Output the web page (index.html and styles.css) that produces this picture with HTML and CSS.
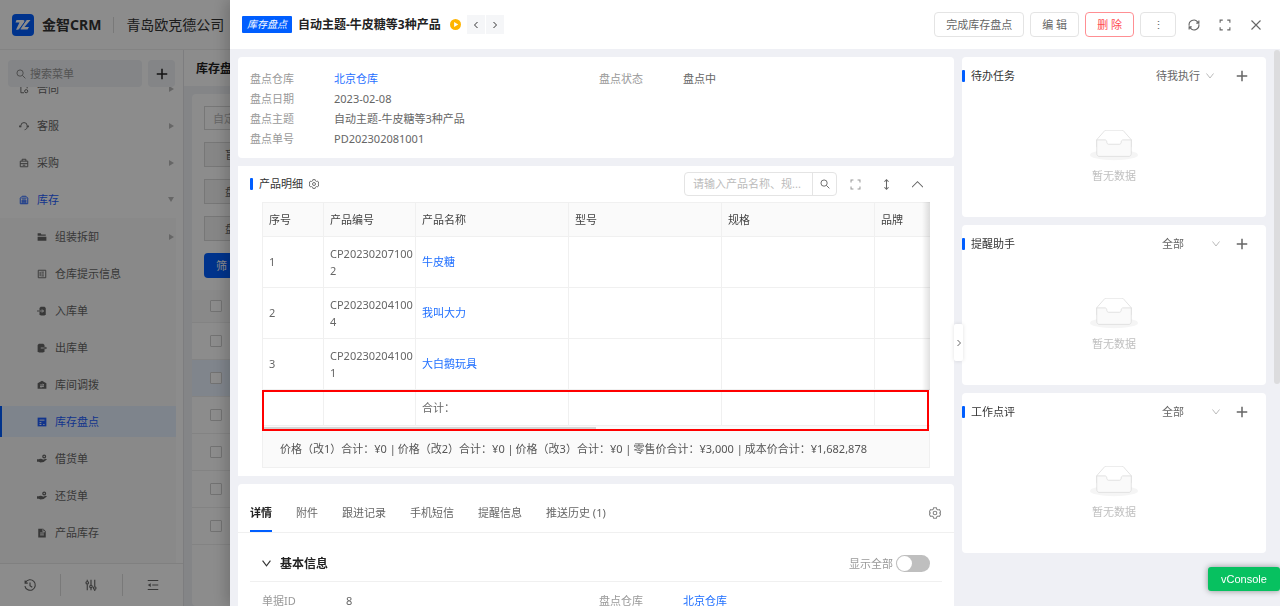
FILE: index.html
```html
<!DOCTYPE html>
<html lang="zh-CN">
<head>
  <meta charset="UTF-8">
  <meta name="viewport" content="width=device-width, initial-scale=1.0">
  <title>库存盘点 - 金智CRM</title>
  <link rel="stylesheet" href="styles.css">
</head>
<body>
  <svg class="sprite" aria-hidden="true">
    <symbol id="i-search" viewBox="0 0 16 16"><circle cx="6.5" cy="6.5" r="5"/><path d="M10.2 10.2L15 15"/></symbol>
    <symbol id="i-plus" viewBox="0 0 16 16"><path d="M8 1v14M1 8h14"/></symbol>
    <symbol id="i-left" viewBox="0 0 16 16"><path d="M11 2L5 8l6 6"/></symbol>
    <symbol id="i-right" viewBox="0 0 16 16"><path d="M5 2l6 6-6 6"/></symbol>
    <symbol id="i-down" viewBox="0 0 16 16"><path d="M1 3l7 9 7-9"/></symbol>
    <symbol id="i-up" viewBox="0 0 16 16"><path d="M0 12l8-8 8 8"/></symbol>
    <symbol id="i-full" viewBox="0 0 16 16"><path d="M1.500 5V1.500H5M11 1.500h3.500V5M14.500 11v3.500H11M5 14.500H1.500V11"/></symbol>
    <symbol id="i-gear" viewBox="0 0 16 16"><path d="M6.200 1h3.600l.5 1.900 1.700 1 1.900-.5 1.800 3.100L14.300 8l1.400 1.500-1.800 3.100-1.900-.5-1.700 1-.5 1.900H6.200l-.5-1.900-1.700-1-1.900.5L.3 9.500 1.700 8 .3 6.500l1.800-3.100 1.900.5 1.700-1z"/><circle cx="8" cy="8" r="2.400"/></symbol>
    <symbol id="i-empty" viewBox="0 0 64 41">
      <ellipse cx="32" cy="33" rx="32" ry="7" fill="#f5f5f5"/>
      <path d="M55 12.760L44.854 1.258C44.367.474 43.656 0 42.907 0H21.093c-.749 0-1.460.474-1.947 1.257L9 12.761V22h46v-9.240z" fill="#fff" stroke="#d9d9d9"/>
      <path d="M41.613 15.931c0-1.605.994-2.930 2.227-2.931H55v18.137C55 33.260 53.680 35 52.050 35h-40.100C10.320 35 9 33.259 9 31.137V13h11.160c1.233 0 2.227 1.323 2.227 2.928v.022c0 1.605 1.005 2.901 2.237 2.901h14.752c1.232 0 2.237-1.308 2.237-2.913v-.007z" fill="#fafafa" stroke="#d9d9d9"/>
    </symbol>
    <symbol id="i-hand" viewBox="0 0 16 16"><path class="solid" d="M0 8.500h3l2-.8 3.500.3 1 1.300 4.500-1.600 2 .6-5.300 4.500-5.200.8L3 12.500H0z"/><circle cx="11.500" cy="4" r="2.200" stroke-width="2"/></symbol>
  </svg>

  <div class="app">
    <header class="topbar">
      <svg class="logo" viewBox="0 0 22 22"><rect width="22" height="22" rx="4" fill="#005eff"/><path d="M4.500 6H11c1.500 0 2 1 1.300 2.300L10 12.500c-1 2-2.500 3.200-4.500 3.200H4L7.500 8.500h-4zM14 6h4.500L12.500 13H17l-1.500 2.600H8.500z" fill="#fff"/><path d="M15 5L7 15.800" stroke="#005eff"/></svg>
      <strong class="brand">金智CRM</strong>
      <span class="company">青岛欧克德公司</span>
    </header>

    <div class="app-body">
      <aside class="sidebar">
        <div class="menu-search">
          <label class="search-box"><svg class="icon"><use href="#i-search"/></svg><input type="text" placeholder="搜索菜单" aria-label="搜索菜单"></label>
          <button class="add-btn" aria-label="添加"><svg class="icon"><use href="#i-plus"/></svg></button>
        </div>
        <nav class="menu">
          <ul class="menu-list">
            <li><a href="#"><svg class="icon" viewBox="0 0 16 16"><path d="M8 14H3V2h10v5"/><circle cx="11.500" cy="11.500" r="2.500"/></svg>合同<i class="caret"></i></a></li>
            <li><a href="#"><svg class="icon" viewBox="0 0 16 16"><path d="M3 10V7.500a5 5 0 0 1 10 0V10c0 2-1.500 3.500-4 4"/><path d="M1.500 7v3M14.500 7v3" stroke-width="2.500"/></svg>客服<i class="caret"></i></a></li>
            <li><a href="#"><svg class="icon" viewBox="0 0 16 16"><path d="M2 5h12v9H2zM5 5V2h6v3M2 9h12M6 11.500h4"/></svg>采购<i class="caret"></i></a></li>
            <li class="open"><a href="#"><svg class="icon" viewBox="0 0 16 16"><path d="M2 14V5l3-3h6l3 3v9zM5 14V8h6v6M8 8v6M5 11h6M4 5h8"/></svg>库存<i class="caret caret-down"></i></a></li>
          </ul>
          <ul class="menu-list submenu">
            <li><a href="#"><svg class="icon" viewBox="0 0 16 16"><path class="solid" d="M1 2h5l1 2h7v2H1zM1 7.500h14V14H1z"/></svg>组装拆卸<i class="caret"></i></a></li>
            <li><a href="#"><svg class="icon" viewBox="0 0 16 16"><path d="M2 2h12v12H2zM7 5h4M7 8h4M7 11h4M5 4.500v7"/></svg>仓库提示信息</a></li>
            <li><a href="#"><svg class="icon" viewBox="0 0 16 16"><path class="solid" d="M6 1h6l2 2v10l-2 2H6l-2-2V3z"/><path d="M0 8h4"/><path d="M5 8h5M8 5.500L10.500 8 8 10.500" stroke="#fff"/></svg>入库单</a></li>
            <li><a href="#"><svg class="icon" viewBox="0 0 16 16"><path class="solid" d="M3 1h7l2 2v10l-2 2H3l-2-2V3z"/><path d="M6 8h5" stroke="#fff"/><path d="M11 8h4M13 6l2 2-2 2"/></svg>出库单</a></li>
            <li><a href="#"><svg class="icon" viewBox="0 0 16 16"><path class="solid" d="M8 1l7 4v9H1V5z"/><path d="M5 8h6L9 6.500M11 10.500H5L7 12" stroke="#fff"/></svg>库间调拨</a></li>
            <li class="active"><a href="#"><svg class="icon" viewBox="0 0 16 16"><path class="solid" d="M1 1h14v14H1z"/><path d="M4 5h8M4 9h3M4 12h3M10 12h2" stroke="#fff"/></svg>库存盘点</a></li>
            <li><a href="#"><svg class="icon"><use href="#i-hand"/></svg>借货单</a></li>
            <li><a href="#"><svg class="icon"><use href="#i-hand"/></svg>还货单</a></li>
            <li><a href="#"><svg class="icon" viewBox="0 0 16 16"><path class="solid" d="M2 1h8l4 4v10H2z"/><path d="M5 8h6M5 11h6M9.500 2v4H13" stroke="#fff"/></svg>产品库存</a></li>
          </ul>
        </nav>
        <div class="side-foot">
          <button aria-label="历史"><svg class="icon" viewBox="0 0 16 16"><path d="M2 4.500a7 7 0 1 1-.8 5M1.500 2v3.500H5M8 4.500V9l3 2"/></svg></button>
          <button aria-label="设置"><svg class="icon" viewBox="0 0 16 16"><path d="M3 1v2M3 7v8M8 1v7M8 12v3M13 1v9M13 14v2"/><circle cx="3" cy="5" r="1.700"/><circle cx="8" cy="10" r="1.700"/><circle cx="13" cy="12" r="1.700"/></svg></button>
          <button aria-label="收起"><svg class="icon" viewBox="0 0 16 16"><path d="M1 2h14M7 8h8M1 14h14"/><path class="solid" d="M1 8l4-2.500v5z"/></svg></button>
        </div>
      </aside>

      <main class="list-page">
        <h2>库存盘点</h2>
        <div class="list-card">
          <div class="filters">
            <input type="text" placeholder="自定义筛选" aria-label="自定义筛选">
            <button>盲盘</button>
            <button>盘点</button>
            <button>盘点</button>
            <button class="primary">筛 选</button>
          </div>
          <table class="list-table">
            <tr><th><input type="checkbox" aria-label="全选"></th></tr>
            <tr><td><input type="checkbox" aria-label="选择"></td></tr>
            <tr class="current"><td><input type="checkbox" aria-label="选择"></td></tr>
            <tr><td><input type="checkbox" aria-label="选择"></td></tr>
            <tr><td><input type="checkbox" aria-label="选择"></td></tr>
            <tr><td><input type="checkbox" aria-label="选择"></td></tr>
            <tr><td><input type="checkbox" aria-label="选择"></td></tr>
          </table>
        </div>
      </main>
    </div>
  </div>

  <div class="mask"></div>

  <section class="drawer">
    <header class="drawer-head">
      <span class="tag">库存盘点</span>
      <h1>自动主题-牛皮糖等3种产品</h1>
      <svg class="play" viewBox="0 0 12 12"><circle cx="6" cy="6" r="6" fill="#ffb400"/><path d="M4.500 3.200v5.600L9 6z" fill="#fff"/></svg>
      <div class="pager">
        <button aria-label="上一条"><svg class="icon"><use href="#i-left"/></svg></button>
        <button aria-label="下一条"><svg class="icon"><use href="#i-right"/></svg></button>
      </div>
      <div class="actions">
        <button class="btn">完成库存盘点</button>
        <button class="btn">编 辑</button>
        <button class="btn danger">删 除</button>
        <button class="btn more" aria-label="更多">⋮</button>
      </div>
      <div class="tools">
        <button aria-label="刷新"><svg class="icon" viewBox="0 0 16 16"><path d="M1.500 9a6.500 6.500 0 0 1 11.300-5.300L14 5.500M14.500 7a6.500 6.500 0 0 1-11.300 5.300L2 10.500M14.500 2v3.500H11M1.500 14v-3.500H5"/></svg></button>
        <button aria-label="全屏"><svg class="icon"><use href="#i-full"/></svg></button>
        <button aria-label="关闭"><svg class="icon" viewBox="0 0 16 16"><path d="M2 2l12 12M14 2L2 14"/></svg></button>
      </div>
    </header>

    <div class="drawer-body">
      <div class="col-main">
        <section class="card summary">
          <dl class="info">
            <div><dt>盘点仓库</dt><dd><a href="#">北京仓库</a></dd></div>
            <div><dt>盘点状态</dt><dd>盘点中</dd></div>
            <div class="wide"><dt>盘点日期</dt><dd>2023-02-08</dd></div>
            <div class="wide"><dt>盘点主题</dt><dd>自动主题-牛皮糖等3种产品</dd></div>
            <div class="wide"><dt>盘点单号</dt><dd>PD202302081001</dd></div>
          </dl>
        </section>

        <section class="card products">
          <div class="products-head">
            <h3 class="bar-title">产品明细</h3>
            <svg class="icon gear"><use href="#i-gear"/></svg>
            <div class="search-group">
              <input type="text" placeholder="请输入产品名称、规..." aria-label="搜索产品">
              <button aria-label="搜索"><svg class="icon"><use href="#i-search"/></svg></button>
            </div>
            <button class="tool light" aria-label="全屏"><svg class="icon"><use href="#i-full"/></svg></button>
            <button class="tool" aria-label="行高"><svg class="icon" viewBox="0 0 16 16"><path d="M8 1v14M5 4l3-3 3 3M5 12l3 3 3-3"/></svg></button>
            <button class="tool" aria-label="收起"><svg class="icon"><use href="#i-up"/></svg></button>
          </div>
          <div class="table-wrap">
            <div class="table-scroll">
              <table class="product-table">
                <colgroup><col class="c-no"><col class="c-code"><col class="c-wide"><col class="c-wide"><col class="c-wide"><col class="c-wide"></colgroup>
                <thead>
                  <tr><th>序号</th><th>产品编号</th><th>产品名称</th><th>型号</th><th>规格</th><th>品牌</th></tr>
                </thead>
                <tbody>
                  <tr><td>1</td><td class="code">CP202302071002</td><td><a href="#">牛皮糖</a></td><td></td><td></td><td></td></tr>
                  <tr><td>2</td><td class="code">CP202302041004</td><td><a href="#">我叫大力</a></td><td></td><td></td><td></td></tr>
                  <tr><td>3</td><td class="code">CP202302041001</td><td><a href="#">大白鹅玩具</a></td><td></td><td></td><td></td></tr>
                </tbody>
                <tfoot>
                  <tr><td></td><td></td><td>合计：</td><td></td><td></td><td></td></tr>
                </tfoot>
              </table>
            </div>
            <div class="scroll-x"></div>
            <div class="total-mark"></div>
          </div>
          <div class="totals">
            <span>价格（改1）合计：¥0 |</span>
            <span>价格（改2）合计：¥0 |</span>
            <span>价格（改3）合计：¥0 |</span>
            <span>零售价合计：¥3,000 |</span>
            <span>成本价合计：¥1,682,878</span>
          </div>
        </section>

        <section class="card detail">
          <nav class="tabs">
            <a class="on" href="#">详情</a>
            <a href="#">附件</a>
            <a href="#">跟进记录</a>
            <a href="#">手机短信</a>
            <a href="#">提醒信息</a>
            <a href="#">推送历史 (1)</a>
            <button aria-label="设置"><svg class="icon"><use href="#i-gear"/></svg></button>
          </nav>
          <div class="section-head">
            <svg class="icon"><use href="#i-down"/></svg>
            <h3>基本信息</h3>
            <label for="show-all">显示全部</label>
            <input type="checkbox" class="switch" id="show-all">
          </div>
          <dl class="info">
            <div><dt>单据ID</dt><dd>8</dd></div>
            <div><dt>盘点仓库</dt><dd><a href="#">北京仓库</a></dd></div>
          </dl>
        </section>
      </div>

      <aside class="col-side">
        <button class="fold" aria-label="收起侧栏"><svg class="icon"><use href="#i-right"/></svg></button>
        <section class="card widget todo">
          <div class="widget-head">
            <h3 class="bar-title">待办任务</h3>
            <select aria-label="待办任务筛选"><option>待我执行</option></select>
            <svg class="icon arrow"><use href="#i-down"/></svg>
            <button aria-label="添加"><svg class="icon"><use href="#i-plus"/></svg></button>
          </div>
          <div class="empty"><svg><use href="#i-empty"/></svg><p>暂无数据</p></div>
        </section>
        <section class="card widget">
          <div class="widget-head">
            <h3 class="bar-title">提醒助手</h3>
            <select aria-label="提醒助手筛选"><option>全部</option></select>
            <svg class="icon arrow"><use href="#i-down"/></svg>
            <button aria-label="添加"><svg class="icon"><use href="#i-plus"/></svg></button>
          </div>
          <div class="empty"><svg><use href="#i-empty"/></svg><p>暂无数据</p></div>
        </section>
        <section class="card widget">
          <div class="widget-head">
            <h3 class="bar-title">工作点评</h3>
            <select aria-label="工作点评筛选"><option>全部</option></select>
            <svg class="icon arrow"><use href="#i-down"/></svg>
            <button aria-label="添加"><svg class="icon"><use href="#i-plus"/></svg></button>
          </div>
          <div class="empty"><svg><use href="#i-empty"/></svg><p>暂无数据</p></div>
        </section>
      </aside>
      <div class="scroll-y"></div>
    </div>
  </section>

  <button class="vconsole">vConsole</button>
</body>
</html>
```

FILE: styles.css
```css
* {
  box-sizing: border-box;
}
body {
  margin: 0;
  height: 100vh;
  overflow: hidden;
  font-family: "Noto Sans", "Noto Sans CJK SC", sans-serif;
  font-size: 11px;
  line-height: 16px;
  color: #666;
}
h1, h2, h3, p, ul, dl, dd {
  margin: 0;
  padding: 0;
}
ul {
  list-style: none;
}
a {
  color: #1f6fff;
  text-decoration: none;
}
button, input, select {
  font: inherit;
  color: inherit;
  margin: 0;
  padding: 0;
  border: none;
  background: none;
  outline: none;
}
button {
  display: flex;
  align-items: center;
  justify-content: center;
  cursor: pointer;
}
input::placeholder {
  color: #bbb;
  opacity: 1;
}
.sprite {
  display: none;
}
.icon {
  width: 10px;
  height: 10px;
  flex: none;
  overflow: visible;
  fill: none;
  stroke: currentColor;
  stroke-width: 1.5;
}
.solid {
  fill: currentColor;
  stroke: none;
}

/* page under the drawer */
.app {
  height: 100vh;
  display: flex;
  flex-direction: column;
  background: #fff;
}
.topbar {
  height: 50px;
  flex: none;
  display: flex;
  align-items: center;
  padding-left: 12px;
  border-bottom: 1px solid #eee;
  color: #333;
}
.logo {
  width: 22px;
  height: 22px;
}
.brand {
  margin-left: 8px;
  padding-right: 12px;
  border-right: 1px solid #ddd;
  font-size: 14px;
}
.company {
  margin-left: 12px;
  font-size: 14px;
}
.app-body {
  flex: 1;
  min-height: 0;
  display: flex;
}
.sidebar {
  width: 184px;
  flex: none;
  display: flex;
  flex-direction: column;
  border-right: 1px solid #e4e4e8;
}
.menu-search {
  display: flex;
  gap: 6px;
  padding: 10px 8px 0;
}
.search-box {
  flex: 1;
  min-width: 0;
  height: 27px;
  display: flex;
  align-items: center;
  gap: 4px;
  padding: 0 8px;
  border-radius: 4px;
  background: #f0f2f6;
  color: #888;
}
.search-box input {
  width: 100%;
  min-width: 0;
}
.search-box input::placeholder {
  color: #999;
}
.add-btn {
  width: 27px;
  height: 27px;
  border-radius: 4px;
  background: #f0f2f6;
  color: #222;
}
.add-btn .icon {
  width: 12px;
  height: 12px;
  stroke-width: 2;
}
.menu {
  flex: 1;
  min-height: 0;
  overflow: hidden;
  padding-right: 7px;
}
.menu-list:first-child {
  margin-top: -17px;
}
.menu-list {
  display: flow-root;
}
.menu-list li {
  padding: 3px 0;
}
.menu-list a {
  height: 31px;
  display: flex;
  align-items: center;
  gap: 8px;
  padding: 0 2px 0 19px;
  color: #666;
}
.menu-list .open > a {
  color: #1f5fff;
}
.submenu {
  height: 100%;
  background: #fafafa;
}
.submenu a {
  padding-left: 37px;
}
.menu-list .active a {
  padding-left: 35px;
  border-left: 2px solid #005eff;
  background: #e6f1ff;
  color: #1f5fff;
}
.caret {
  margin-left: auto;
  border: 3px solid transparent;
  border-left: 5px solid #bbb;
  border-right: none;
}
.caret-down {
  border: 3px solid transparent;
  border-top: 5px solid #bbb;
  border-bottom: none;
}
.side-foot {
  height: 43px;
  flex: none;
  display: flex;
  align-items: center;
  border-top: 1px solid #eaeaea;
}
.side-foot button {
  flex: 1;
  height: 22px;
}
.side-foot button + button {
  border-left: 1px solid #ddd;
}
.side-foot .icon {
  width: 12px;
  height: 12px;
}
.list-page {
  flex: 1;
  display: flex;
  flex-direction: column;
  background: #f0f2f6;
}
.list-page h2 {
  height: 36px;
  flex: none;
  padding-left: 12px;
  background: #fff;
  color: #222;
  font-size: 12px;
  line-height: 38px;
}
.list-card {
  flex: 1;
  margin: 8px 8px 0;
  background: #fff;
  border-radius: 4px;
}
.filters {
  display: flex;
  flex-direction: column;
  align-items: flex-start;
  gap: 12px;
  padding: 12px;
}
.filters input,
.filters button {
  width: 160px;
  height: 25px;
  padding: 0 8px;
  border: 1px solid #d9d9d9;
}
.filters input {
  height: 24px;
}
.filters button {
  justify-content: flex-start;
  padding-left: 20px;
  background: #f5f5f5;
}
.filters .primary {
  width: 50px;
  padding-left: 12px;
  border: none;
  border-radius: 4px;
  background: #005eff;
  color: #fff;
}
.list-table {
  width: 100%;
  border-spacing: 0;
}
.list-table td,
.list-table th {
  height: 37px;
  padding: 0 18px;
  border-bottom: 1px solid #eee;
  text-align: left;
}
.list-table th {
  height: 33px;
  background: #fafafa;
}
.list-table .current {
  background: #e9f2ff;
}
.list-table input {
  appearance: none;
  display: block;
  width: 12px;
  height: 12px;
  border: 1px solid #d0d0d0;
  border-radius: 1px;
  background: #fff;
}

.mask {
  position: fixed;
  inset: 0;
  background: rgba(0, 0, 0, 0.45);
}

/* drawer */
.drawer {
  position: fixed;
  top: 0;
  right: 0;
  bottom: 0;
  left: 230px;
  display: flex;
  flex-direction: column;
  background: #eff0f5;
  box-shadow: -4px 0 14px rgba(0, 0, 0, 0.2);
}
.drawer-head {
  height: 50px;
  flex: none;
  display: flex;
  align-items: center;
  padding: 0 18px 0 12px;
  background: #fff;
  border-bottom: 1px solid #eff0f5;
}
.tag {
  padding: 0 5px;
  border-radius: 1px;
  background: #005eff;
  color: #fff;
  font-size: 10px;
  font-style: italic;
  line-height: 17px;
}
.drawer-head h1 {
  margin-left: 6px;
  color: #222;
  font-size: 12px;
}
.play {
  width: 11px;
  height: 11px;
  margin-left: 9px;
}
.pager {
  display: flex;
  gap: 1px;
  margin-left: 6px;
}
.pager button {
  width: 18px;
  height: 19px;
  background: #f5f6f8;
  color: #333;
}
.pager .icon {
  width: 8px;
  height: 8px;
  stroke-width: 2;
}
.actions {
  display: flex;
  gap: 6px;
  margin-left: auto;
}
.btn {
  height: 25px;
  padding: 0 11px;
  border: 1px solid #e4e4e4;
  border-radius: 4px;
  background: #fff;
}
.btn.danger {
  border-color: #ff8f93;
  color: #ff4d4f;
}
.btn.more {
  width: 36px;
}
.tools {
  display: flex;
  gap: 19px;
  margin-left: 12px;
}
.tools .icon {
  width: 12px;
  height: 12px;
}
.drawer-body {
  flex: 1;
  min-height: 0;
  display: flex;
  gap: 8px;
  padding: 7px 0 0 8px;
  overflow: hidden;
}
.col-main {
  flex: 1;
  min-width: 0;
  display: flex;
  flex-direction: column;
  gap: 8px;
}
.card {
  flex: none;
  border-radius: 4px;
  background: #fff;
}
.summary {
  padding: 12px 6px 9px 12px;
}
.info {
  display: grid;
  grid-template-columns: 1fr 1fr;
}
.info div {
  display: flex;
  line-height: 20px;
}
.info .wide {
  grid-column: 1 / 3;
}
.info dt {
  width: 84px;
  color: #999;
}
.products {
  border-radius: 0;
  padding-bottom: 8px;
}
.products-head {
  height: 36px;
  display: flex;
  align-items: center;
  padding: 0 31px 0 12px;
}
.bar-title {
  display: flex;
  align-items: center;
  gap: 6px;
  color: #333;
  font-size: 11px;
  font-weight: normal;
}
.bar-title::before {
  content: "";
  width: 3px;
  height: 12px;
  border-radius: 1px;
  background: #005eff;
}
.gear {
  margin-left: 6px;
}
.search-group {
  width: 153px;
  height: 24px;
  display: flex;
  margin-left: auto;
  margin-right: 13px;
  border: 1px solid #e4e4e4;
  border-radius: 4px;
}
.search-group input {
  flex: 1;
  min-width: 0;
  padding-left: 8px;
}
.search-group button {
  width: 24px;
  border-left: 1px solid #e4e4e4;
}
.tool {
  margin-right: 20px;
}
.tool:last-child {
  margin-right: 0;
}
.tool .icon {
  width: 11px;
  height: 11px;
}
.tool.light {
  color: #999;
}
.table-wrap {
  position: relative;
  margin: 0 24px;
}
.table-scroll {
  overflow: hidden;
  border-left: 1px solid #f0f0f0;
  border-top: 1px solid #f0f0f0;
}
/* shade on the right edge while more columns are hidden */
.table-wrap::after {
  content: "";
  position: absolute;
  top: 0;
  right: 0;
  bottom: 41px;
  width: 8px;
  background: linear-gradient(to right, rgba(0, 0, 0, 0), rgba(0, 0, 0, 0.12));
}
.product-table {
  width: 765px;
  table-layout: fixed;
  border-spacing: 0;
}
.c-no {
  width: 61px;
}
.c-code {
  width: 92px;
}
.c-wide {
  width: 153px;
}
.product-table th,
.product-table td {
  height: 51px;
  padding: 0 6px;
  border-right: 1px solid #f0f0f0;
  border-bottom: 1px solid #f0f0f0;
  text-align: left;
}
.product-table th {
  height: 34px;
  background: #fafafa;
  color: #444;
  font-weight: normal;
}
.product-table .code {
  padding-right: 1px;
  line-height: 17px;
  word-break: break-all;
}
.product-table tfoot td {
  height: 36px;
}
.scroll-x {
  height: 5px;
  background: linear-gradient(#d4d4d4, #d4d4d4) no-repeat left / 50% 4px #fafafa;
}
.total-mark {
  position: absolute;
  left: 0;
  right: 1px;
  bottom: 0;
  height: 41px;
  border: 2px solid #f00;
}
.totals {
  display: flex;
  gap: 2px;
  margin: 0 24px;
  padding: 10px 17px;
  border: 1px solid #f0f0f0;
  border-top: none;
  background: #fafafa;
  color: #555;
  white-space: nowrap;
}
.tabs {
  height: 49px;
  display: flex;
  align-items: flex-end;
  gap: 24px;
  padding: 0 13px 0 12px;
  border-bottom: 1px solid #f0f0f0;
}
.tabs a {
  height: 27px;
  color: #666;
}
.tabs .on {
  border-bottom: 2px solid #005eff;
  color: #222;
  font-weight: bold;
}
.tabs button {
  align-self: center;
  margin-left: auto;
  padding-top: 10px;
  color: #888;
}
.tabs .icon {
  width: 12px;
  height: 12px;
}
.section-head {
  display: flex;
  align-items: center;
  margin: 0 12px;
  padding: 22px 12px 9px;
  border-bottom: 1px solid #f0f0f0;
}
.section-head .icon {
  width: 9px;
  height: 9px;
  color: #333;
  stroke-width: 2;
}
.section-head h3 {
  margin-left: 9px;
  color: #222;
  font-size: 12px;
  line-height: 17px;
}
.section-head label {
  margin-left: auto;
  margin-right: 3px;
  color: #999;
}
.switch {
  appearance: none;
  width: 34px;
  height: 17px;
  border-radius: 9px;
  background: #bfbfbf;
}
.switch::before {
  content: "";
  display: block;
  width: 15px;
  height: 15px;
  margin: 1px;
  border-radius: 50%;
  background: #fff;
}
.detail .info {
  padding: 9px 18px 10px 24px;
}

/* right column */
.col-side {
  position: relative;
  width: 304px;
  flex: none;
  display: flex;
  flex-direction: column;
  gap: 8px;
}
.fold {
  position: absolute;
  top: 267px;
  left: -8px;
  width: 9px;
  height: 37px;
  border-radius: 2px;
  background: #fff;
  box-shadow: 0 0 4px rgba(0, 0, 0, 0.12);
}
.fold .icon {
  width: 8px;
  height: 8px;
  stroke-width: 2;
}
.widget {
  height: 160px;
}
.widget-head {
  height: 38px;
  display: flex;
  align-items: center;
  padding-right: 18px;
}
.widget-head select {
  width: 44px;
  margin-left: auto;
  margin-right: 6px;
  appearance: none;
}
.arrow {
  width: 8px;
  height: 8px;
  color: #bbb;
  stroke-width: 2;
}
.widget-head button {
  margin-left: 16px;
}
.todo .widget-head button {
  margin-left: 22px;
}
.widget-head button .icon {
  width: 12px;
  height: 12px;
  stroke-width: 2;
}
.empty {
  display: flex;
  flex-direction: column;
  align-items: center;
  gap: 7px;
  padding-top: 35px;
  color: #bfbfbf;
}
.empty svg {
  width: 48px;
  height: 31px;
  overflow: visible;
}
.scroll-y {
  width: 6px;
  height: 334px;
  margin-top: -7px;
  border-radius: 3px;
  background: #dcdcde;
}
.vconsole {
  position: fixed;
  right: 0;
  bottom: 15px;
  width: 72px;
  height: 24px;
  border-radius: 3px;
  background: #07c160;
  box-shadow: 0 0 6px rgba(0, 0, 0, 0.4);
  color: #fff;
  font-family: "Liberation Sans", Arial, sans-serif;
  font-size: 11px;
}
```
